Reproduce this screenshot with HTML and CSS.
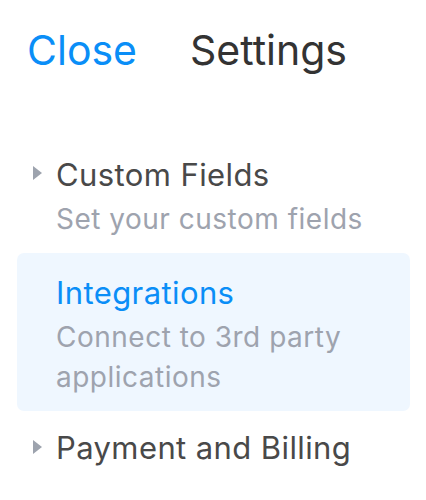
FILE: index.html
```html
<!DOCTYPE html>
<html>
<head>
<meta charset="utf-8">
<link rel="stylesheet" href="styles.css">
</head>
<body>
<div class="page">
  <header class="header">
    <span class="close">Close</span>
    <span class="title">Settings</span>
  </header>
  <ul class="menu">
    <li class="item">
      <span class="caret"></span>
      <div class="text">
        <div class="name">Custom Fields</div>
        <div class="desc">Set your custom fields</div>
      </div>
    </li>
    <li class="item active">
      <div class="text">
        <div class="name">Integrations</div>
        <div class="desc">Connect to 3rd party applications</div>
      </div>
    </li>
    <li class="item last">
      <span class="caret"></span>
      <div class="text">
        <div class="name">Payment and Billing</div>
      </div>
    </li>
  </ul>
</div>
</body>
</html>
```
FILE: styles.css
```css
html, body {
  margin: 0;
  padding: 0;
  background: #ffffff;
}
.page {
  font-family: "Inter", "Noto Sans", sans-serif;
  width: 426px;
  height: 500px;
  overflow: hidden;
}
.header {
  display: flex;
  align-items: baseline;
  gap: 53px;
  padding: 25px 0 0 27px;
  height: 50px;
  line-height: 50px;
  font-size: 41px;
}
.close {
  color: #0a8ef7;
}
.title {
  color: #333333;
}
.menu {
  list-style: none;
  margin: 0;
  padding: 60px 16px 0 17px;
  display: flex;
  flex-direction: column;
}
.item {
  position: relative;
  padding: 20px 20px 14px 39px;
  border-radius: 7px;
}
.item.last {
  padding-top: 17px;
}
.item.active {
  background: #eff7ff;
}
.caret {
  position: absolute;
  left: 16px;
  top: 31px;
  width: 0;
  height: 0;
  border-top: 7.5px solid transparent;
  border-bottom: 7.5px solid transparent;
  border-left: 9px solid #9da3ae;
}
.item.last .caret {
  top: 29px;
}
.name {
  font-size: 31px;
  line-height: 40px;
  letter-spacing: 0.4px;
  margin-bottom: 4px;
  color: #494949;
}
.active .name {
  color: #0a8ef7;
}
.desc {
  font-size: 28px;
  line-height: 40px;
  letter-spacing: 0.5px;
  color: #9ea3ae;
}
```
